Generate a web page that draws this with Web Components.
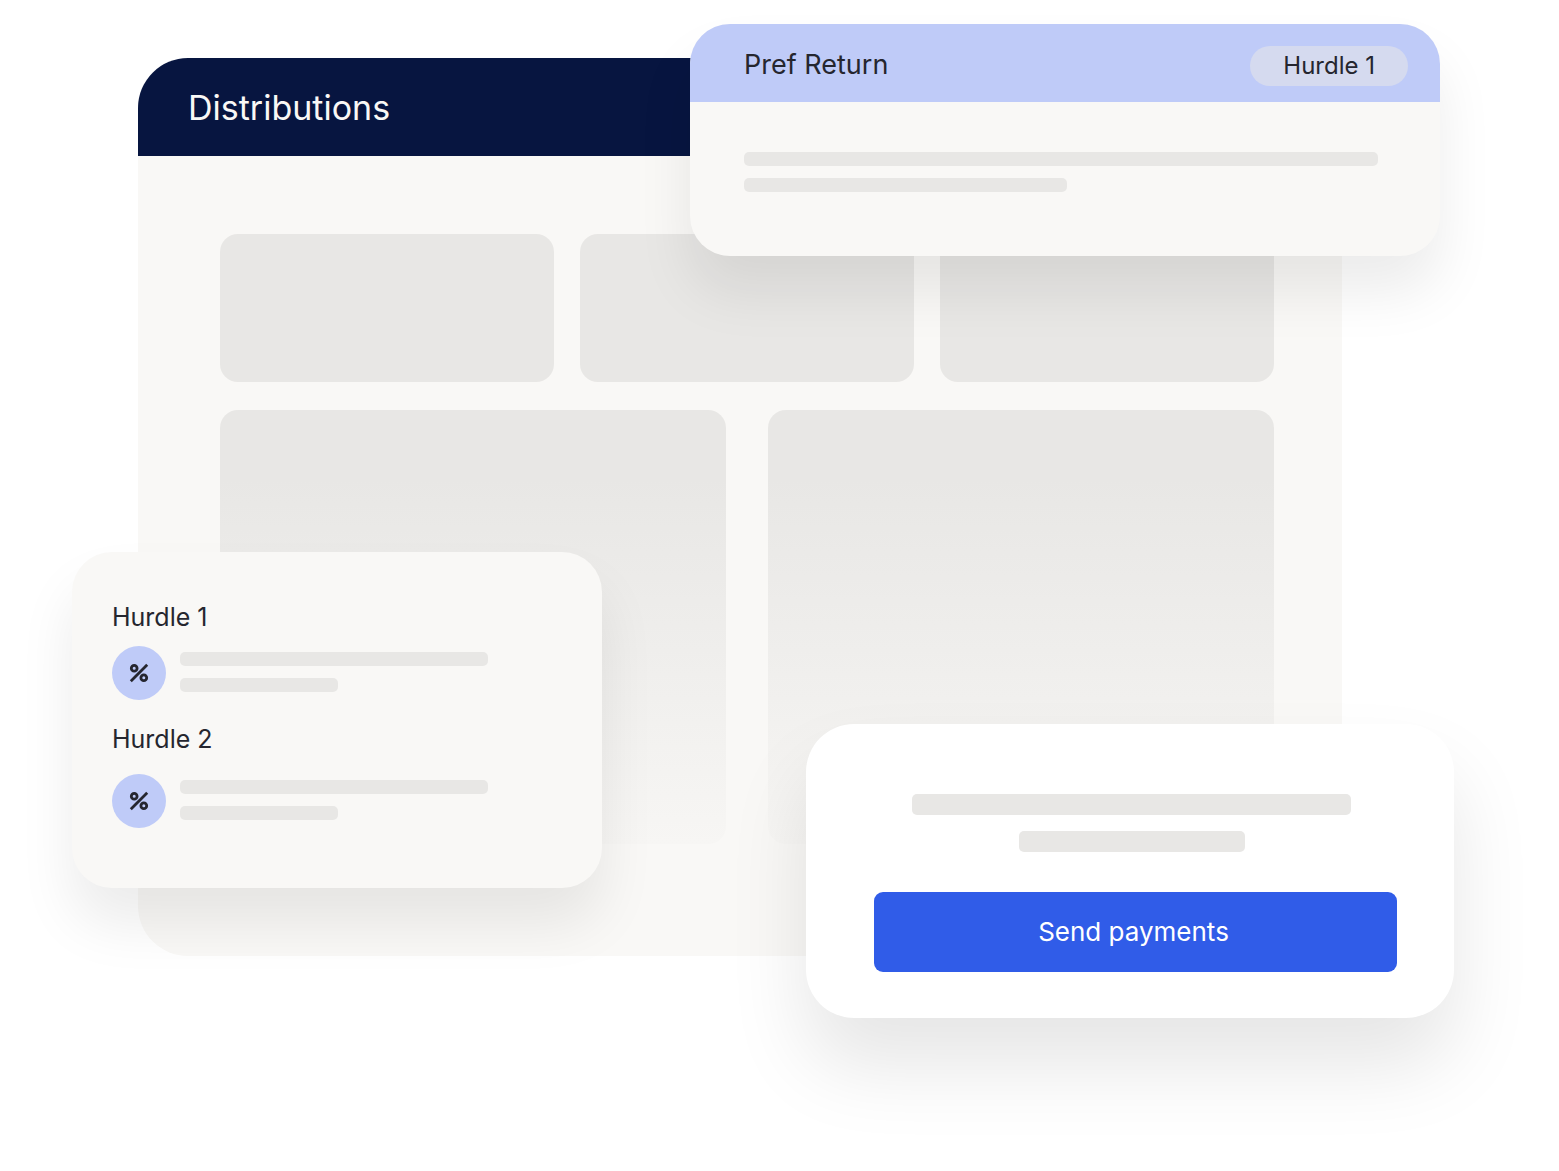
<!DOCTYPE html>
<html lang="en">
<head>
<meta charset="utf-8">
<meta name="viewport" content="width=device-width, initial-scale=1">
<title>Distributions</title>
<style>
  :root {
    --navy: #071540;
    --periwinkle: #bfcbf8;
    --blue: #305ce8;
    --ink: #25262f;
    --paper: #f9f8f6;
    --placeholder: #e8e7e5;
  }
  body {
    margin: 0;
    background: #fff;
    color: var(--ink);
    font-family: Inter, "Liberation Sans", sans-serif;
    font-weight: 400;
  }
</style>
</head>
<body>
<distributions-scene></distributions-scene>

<script>
class SkeletonBar extends HTMLElement {
  constructor() {
    super();
    this.attachShadow({ mode: 'open' });
  }

  connectedCallback() {
    this.shadowRoot.innerHTML = /* html */`
      <style>
        :host {
          display: block;
          height: var(--bar-height, 14px);
          border-radius: 5px;
          background: var(--placeholder);
        }
      </style>
    `;
  }
}

class DashboardPanel extends HTMLElement {
  constructor() {
    super();
    this.attachShadow({ mode: 'open' });
  }

  connectedCallback() {
    this.render();
  }

  static get styles() {
    return /* css */`
    :host {
      display: block;
      border-radius: 50px;
      overflow: hidden;
      background: var(--paper);
    }
    header {
      display: flex;
      align-items: center;
      padding: 29px 50px 27px;
      background: var(--navy);
      color: var(--paper);
    }
    h1 {
      margin: 0;
      font-size: 34px;
      line-height: 42px;
      font-weight: inherit;
    }
    .body {
      display: flex;
      flex-direction: column;
      gap: 28px;
      padding: 78px 68px 106px 82px;
    }
    .row {
      display: grid;
      grid-template-columns: repeat(3, 1fr);
      gap: 26px;
    }
    .row.wide {
      grid-template-columns: repeat(2, 1fr);
      gap: 42px;
    }
    .tile {
      height: 148px;
      border-radius: 18px;
      background: var(--placeholder);
    }
    .wide .tile {
      height: 434px;
      margin-bottom: 6px;
      background: linear-gradient(var(--placeholder) 16%, #f7f6f4);
    }
    `;
  }

  render() {
    this.shadowRoot.innerHTML = /* html */`
    <style>${DashboardPanel.styles}</style>
      <header><h1><slot></slot></h1></header>
      <div class="body">
        <div class="row">
          <div class="tile"></div>
          <div class="tile"></div>
          <div class="tile"></div>
        </div>
        <div class="row wide">
          <div class="tile"></div>
          <div class="tile"></div>
        </div>
      </div>
    `;
  }
}

class ReturnCard extends HTMLElement {
  constructor() {
    super();
    this.attachShadow({ mode: 'open' });
  }

  connectedCallback() {
    this.render();
  }

  static get styles() {
    return /* css */`
    :host {
      display: block;
      border-radius: 40px;
      background: var(--paper);
      box-shadow: 0 36px 56px rgba(0, 0, 0, .08);
    }
    header {
      display: flex;
      align-items: flex-start;
      justify-content: space-between;
      padding: 22px 32px 16px 54px;
      border-radius: 40px 40px 0 0;
      background: var(--periwinkle);
    }
    h2 {
      margin: 0;
      font-size: 27px;
      line-height: 38px;
      font-weight: inherit;
    }
    .badge {
      padding: 0 33px;
      border-radius: 20px;
      background: #d5daef;
      font-size: 24px;
      line-height: 40px;
    }
    .body {
      display: flex;
      flex-direction: column;
      gap: 12px;
      padding: 50px 62px 64px 54px;
    }
    .short {
      width: 51%;
    }
    `;
  }

  render() {
    this.shadowRoot.innerHTML = /* html */`
    <style>${ReturnCard.styles}</style>
      <header>
        <h2><slot></slot></h2>
        <span class="badge"><slot name="badge"></slot></span>
      </header>
      <div class="body">
        <skeleton-bar></skeleton-bar>
        <skeleton-bar class="short"></skeleton-bar>
      </div>
    `;
  }
}

class HurdleItem extends HTMLElement {
  constructor() {
    super();
    this.attachShadow({ mode: 'open' });
  }

  connectedCallback() {
    this.render();
  }

  static get styles() {
    return /* css */`
    :host {
      display: flex;
      flex-direction: column;
      gap: var(--item-gap, 14px);
    }
    h3 {
      margin: 0;
      font-size: 25px;
      line-height: 30px;
      font-weight: inherit;
    }
    .line {
      display: flex;
      gap: 14px;
    }
    .icon {
      display: flex;
      flex: none;
      align-items: center;
      justify-content: center;
      width: 54px;
      height: 54px;
      border-radius: 50%;
      background: var(--periwinkle);
    }
    .bars {
      display: flex;
      flex: 1;
      flex-direction: column;
      gap: 12px;
      padding-top: 6px;
    }
    .short {
      width: 158px;
    }
    `;
  }

  render() {
    this.shadowRoot.innerHTML = /* html */`
    <style>${HurdleItem.styles}</style>
      <h3><slot></slot></h3>
      <div class="line">
        <span class="icon">
          <svg width="20" height="20" viewBox="0 0 20 20" fill="none" stroke="#25262f" stroke-width="2.8" aria-hidden="true">
            <circle cx="5.2" cy="5.2" r="2.9"/>
            <circle cx="14.8" cy="14.8" r="2.9"/>
            <path d="M1.8 18.2 18.2 1.8"/>
          </svg>
        </span>
        <div class="bars">
          <skeleton-bar></skeleton-bar>
          <skeleton-bar class="short"></skeleton-bar>
        </div>
      </div>
    `;
  }
}

class HurdleCard extends HTMLElement {
  constructor() {
    super();
    this.attachShadow({ mode: 'open' });
  }

  connectedCallback() {
    this.shadowRoot.innerHTML = /* html */`
      <style>
        :host {
          display: flex;
          flex-direction: column;
          gap: 24px;
          box-sizing: border-box;
          padding: 50px 114px 60px 40px;
          border-radius: 40px;
          background: var(--paper);
          box-shadow: 0 36px 56px rgba(0, 0, 0, .08);
        }
      </style>
      <slot></slot>
    `;
  }
}

class PaymentCard extends HTMLElement {
  constructor() {
    super();
    this.attachShadow({ mode: 'open' });
  }

  connectedCallback() {
    this.render();
  }

  static get styles() {
    return /* css */`
    :host {
      display: flex;
      flex-direction: column;
      gap: 40px;
      padding: 70px 57px 46px 68px;
      border-radius: 48px;
      background: #fff;
      box-shadow: 0 48px 80px rgba(0, 0, 0, .1);
      --bar-height: 21px;
    }
    .bars {
      display: flex;
      flex-direction: column;
      gap: 16px;
      padding: 0 46px 0 38px;
    }
    .short {
      align-self: center;
      width: 226px;
    }
    button {
      padding: 24px 28px 24px 24px;
      border: 0;
      border-radius: 9px;
      background: var(--blue);
      color: #fff;
      font: inherit;
      font-size: 26px;
      line-height: 32px;
      cursor: pointer;
    }
    `;
  }

  render() {
    this.shadowRoot.innerHTML = /* html */`
    <style>${PaymentCard.styles}</style>
      <div class="bars">
        <skeleton-bar></skeleton-bar>
        <skeleton-bar class="short"></skeleton-bar>
      </div>
      <button type="button"><slot></slot></button>
    `;
  }
}

class DistributionsScene extends HTMLElement {
  constructor() {
    super();
    this.attachShadow({ mode: 'open' });
  }

  connectedCallback() {
    this.render();
  }

  static get styles() {
    return /* css */`
    :host {
      display: block;
      position: relative;
      padding: 58px 217px 215px 138px;
    }
    /* cards float over the dashboard */
    return-card,
    hurdle-card,
    payment-card {
      position: absolute;
    }
    return-card {
      top: 24px;
      left: 690px;
      right: 119px;
    }
    hurdle-card {
      top: 552px;
      left: 72px;
      width: 530px;
    }
    .spaced {
      --item-gap: 20px;
    }
    payment-card {
      top: 724px;
      left: 806px;
      right: 105px;
    }
    `;
  }

  render() {
    this.shadowRoot.innerHTML = /* html */`
    <style>${DistributionsScene.styles}</style>
      <dashboard-panel>Distributions</dashboard-panel>
      <return-card>Pref Return<span slot="badge">Hurdle 1</span></return-card>
      <hurdle-card>
        <hurdle-item>Hurdle 1</hurdle-item>
        <hurdle-item class="spaced">Hurdle 2</hurdle-item>
      </hurdle-card>
      <payment-card>Send payments</payment-card>
    `;
  }
}

customElements.define('skeleton-bar', SkeletonBar);
customElements.define('dashboard-panel', DashboardPanel);
customElements.define('return-card', ReturnCard);
customElements.define('hurdle-item', HurdleItem);
customElements.define('hurdle-card', HurdleCard);
customElements.define('payment-card', PaymentCard);
customElements.define('distributions-scene', DistributionsScene);
</script>
</body>
</html>
